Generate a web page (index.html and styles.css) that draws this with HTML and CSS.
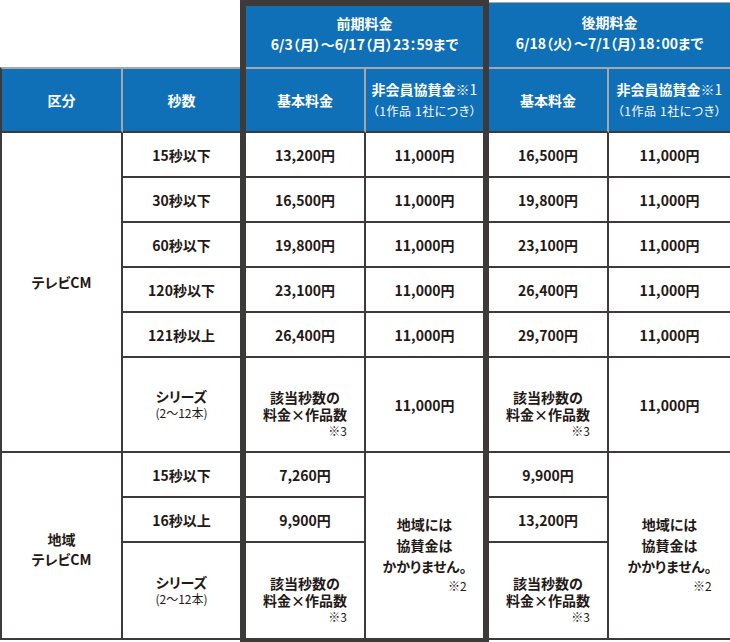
FILE: index.html
```html
<!DOCTYPE html>
<html lang="ja">
<head>
<meta charset="utf-8">
<title>料金表</title>
<link rel="stylesheet" href="styles.css">
</head>
<body>
<div class="table">
  <div class="blank"></div>
  <div class="hd period early">前期料金<br>6/3（月）～6/17（月）23：59まで</div>
  <div class="hd period late">後期料金<br>6/18（火）～7/1（月）18：00まで</div>

  <div class="hd sub c1 r3">区分</div>
  <div class="hd sub c2 r3">秒数</div>
  <div class="hd sub c4 r3">基本料金</div>
  <div class="hd sub c5 r3"><span>非会員協賛金<span class="thin">※1</span></span><span class="small">（1作品 1社につき）</span></div>
  <div class="hd sub c7 r3">基本料金</div>
  <div class="hd sub c8 r3"><span>非会員協賛金<span class="thin">※1</span></span><span class="small">（1作品 1社につき）</span></div>

  <div class="cell c1 span6 tv">テレビCM</div>
  <div class="cell c2">15秒以下</div>
  <div class="cell c4">13,200円</div>
  <div class="cell c5">11,000円</div>
  <div class="cell c7">16,500円</div>
  <div class="cell c8">11,000円</div>

  <div class="cell c2">30秒以下</div>
  <div class="cell c4">16,500円</div>
  <div class="cell c5">11,000円</div>
  <div class="cell c7">19,800円</div>
  <div class="cell c8">11,000円</div>

  <div class="cell c2">60秒以下</div>
  <div class="cell c4">19,800円</div>
  <div class="cell c5">11,000円</div>
  <div class="cell c7">23,100円</div>
  <div class="cell c8">11,000円</div>

  <div class="cell c2">120秒以下</div>
  <div class="cell c4">23,100円</div>
  <div class="cell c5">11,000円</div>
  <div class="cell c7">26,400円</div>
  <div class="cell c8">11,000円</div>

  <div class="cell c2">121秒以上</div>
  <div class="cell c4">26,400円</div>
  <div class="cell c5">11,000円</div>
  <div class="cell c7">29,700円</div>
  <div class="cell c8">11,000円</div>

  <div class="cell c2"><div class="series">シリーズ<span class="count">(2〜12本)</span></div></div>
  <div class="cell c4"><div class="stack">該当秒数の<br>料金×作品数<span class="note">※3</span></div></div>
  <div class="cell c5">11,000円</div>
  <div class="cell c7"><div class="stack">該当秒数の<br>料金×作品数<span class="note">※3</span></div></div>
  <div class="cell c8">11,000円</div>

  <div class="cell c1 span3 local"><div class="lines">地域<br>テレビCM</div></div>
  <div class="cell c2">15秒以下</div>
  <div class="cell c4">7,260円</div>
  <div class="cell c5 span3"><div class="stack wide">地域には<br>協賛金は<br>かかりません。<span class="note">※2</span></div></div>
  <div class="cell c7">9,900円</div>
  <div class="cell c8 span3"><div class="stack wide">地域には<br>協賛金は<br>かかりません。<span class="note">※2</span></div></div>

  <div class="cell c2">16秒以上</div>
  <div class="cell c4">9,900円</div>
  <div class="cell c7">13,200円</div>

  <div class="cell c2"><div class="series">シリーズ<span class="count">(2〜12本)</span></div></div>
  <div class="cell c4"><div class="stack">該当秒数の<br>料金×作品数<span class="note">※3</span></div></div>
  <div class="cell c7"><div class="stack">該当秒数の<br>料金×作品数<span class="note">※3</span></div></div>

  <div class="frame"></div>
</div>
</body>
</html>
```

FILE: styles.css
```css
* { box-sizing: border-box; }
html, body { margin: 0; padding: 0; background: #ffffff; }
body {
  font-family: "Noto Sans CJK JP", "Noto Sans", sans-serif;
  font-feature-settings: "palt";
  font-weight: 700;
  font-size: 14px;
  color: #231815;
}
.table {
  position: relative;
  display: grid;
  width: 730px;
  grid-template-columns: 123px 117px 6px 120px 117px 6px 120px 121px;
  grid-template-rows: 6px 61px 66px 45px 45px 45px 45px 45px 95px 45px 45px 97px 4px;
}
.blank { grid-column: 1 / 3; grid-row: 1 / 3; }
.hd {
  background: #0f6fb7;
  color: #ffffff;
  display: flex;
  flex-direction: column;
  align-items: center;
  justify-content: center;
  text-align: center;
  line-height: 21px;
}
.period { padding-bottom: 5px; }
.early { grid-column: 4 / 6; grid-row: 2 / 3; }
.late { grid-column: 7 / 9; grid-row: 1 / 3; margin-top: 2px; border-top: 1px solid #a7a7a7; }
.r3 { grid-row: 3 / 4; }
.sub {
  border-top: 2px solid #a7a7a7;
  border-right: 2px solid #a7a7a7;
  border-bottom: 2px solid #3e3a39;
}
.sub.c1 { border-left: 2px solid #3e3a39; }
.sub.c2, .sub.c5, .sub.c8 { border-right: 0; }
.thin { font-weight: 400; }
.small { font-size: 12px; font-weight: 400; letter-spacing: 0.6px; }

.c1 { grid-column: 1; }
.c2 { grid-column: 2; }
.c4 { grid-column: 4; }
.c5 { grid-column: 5; }
.c7 { grid-column: 7; }
.c8 { grid-column: 8; }
.span6 { grid-row-end: span 6; }
.span3 { grid-row-end: span 3; }

.cell {
  background: #ffffff;
  display: flex;
  align-items: center;
  justify-content: center;
  text-align: center;
  border-right: 2px solid #3e3a39;
  border-bottom: 2px solid #3e3a39;
  line-height: 20px;
}
.cell.c1 { border-left: 2px solid #3e3a39; }
.cell.c2, .cell.c5, .cell.c8 { border-right: 0; }
.tv { padding-bottom: 20px; }
.local { padding-top: 6px; }

.series { display: flex; flex-direction: column; align-items: center; line-height: 16px; }
.count { font-size: 12px; font-weight: 400; line-height: 18px; }
.stack { display: flex; flex-direction: column; line-height: 17px; padding-top: 2px; }
.stack.wide { line-height: 21px; padding-top: 0; }
.note {
  align-self: flex-end;
  font-size: 12px;
  font-weight: 400;
  line-height: 16px;
  margin-bottom: -16px;
}
.stack.wide .note { line-height: 18px; margin-bottom: -18px; }

.frame {
  position: absolute;
  grid-column: 3 / 7;
  grid-row: 1 / -1;
  top: 0; left: 0; right: 0; bottom: 0;
  border: 6px solid #3e3a39;
  pointer-events: none;
}
```
